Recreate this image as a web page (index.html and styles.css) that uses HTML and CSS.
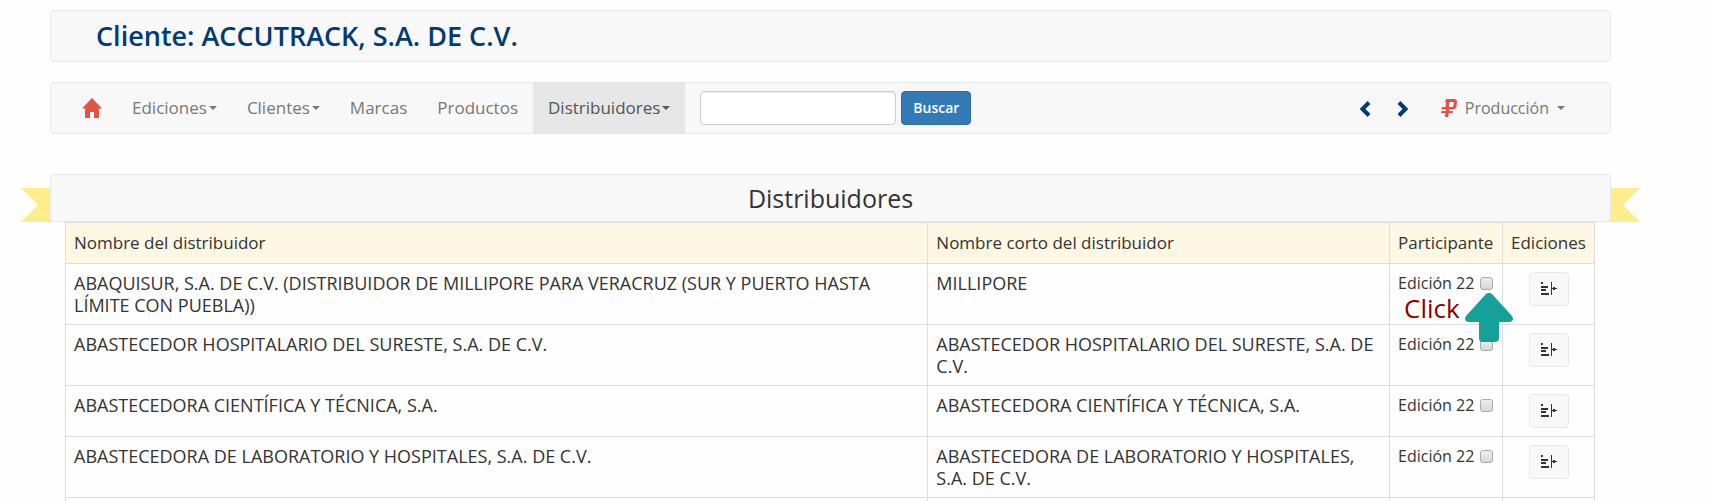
FILE: index.html
```html
<!DOCTYPE html>
<html lang="es">
<head>
<meta charset="utf-8">
<title>Distribuidores</title>
<link rel="stylesheet" href="styles.css">
</head>
<body>
<svg class="sprite" aria-hidden="true">
  <symbol id="bars" viewBox="0 0 16 14">
    <path d="M0 0h2v2H0zM0 4h7v2H0zM0 7h5v2H0zM0 11h8v2H0zM10 0h1v13h-1zM11 6h5v1h-5zM12 5h2v3h-2z" fill="currentColor"/>
  </symbol>
</svg>
<div class="page">
  <header class="bar client"><h1>Cliente: ACCUTRACK, S.A. DE C.V.</h1></header>

  <nav class="bar nav">
    <a class="item home" href="#" aria-label="Inicio"><svg width="20" height="20" viewBox="0 0 20 20"><path d="M10 0l10 10.500h-3V20h-5v-6H8v6H3v-9.500H0z" fill="#e05548"/></svg></a>
    <a class="item" href="#">Ediciones<span class="caret"></span></a>
    <a class="item" href="#">Clientes<span class="caret"></span></a>
    <a class="item" href="#">Marcas</a>
    <a class="item" href="#">Productos</a>
    <a class="item active" href="#">Distribuidores<span class="caret"></span></a>
    <form class="search">
      <input type="text" aria-label="Buscar distribuidor">
      <button type="button">Buscar</button>
    </form>
    <div class="right">
      <a class="step" href="#" aria-label="Anterior"><svg width="12" height="16" viewBox="0 0 12 16"><path d="M10 1.500L3.500 8l6.500 6.500" fill="none" stroke="#003b73" stroke-width="4"/></svg></a>
      <a class="step" href="#" aria-label="Siguiente"><svg width="12" height="16" viewBox="0 0 12 16"><path d="M2 1.500L8.500 8 2 14.500" fill="none" stroke="#003b73" stroke-width="4"/></svg></a>
      <a class="item production" href="#"><svg width="16" height="18" viewBox="0 0 16 18"><path d="M5 0h8q3 0 3 3l-.500 4q-.500 3.500-4 3.500H8.500l-.300 1.500H12l-.500 2H7.800L7 18H3.800l.700-4H0l.500-2h4.300l.300-1.500H.500L1 8h3.500L5 3H4zM8.500 3L8 8h3q1 0 1.300-1l.500-3q0-1-1-1z" fill="#e05548" fill-rule="evenodd"/></svg><span>Producción</span><span class="caret"></span></a>
    </div>
  </nav>

  <section class="ribbon">
    <svg class="tail left" viewBox="0 0 34 34" aria-hidden="true"><path d="M0 0h34v34H0l17-17z"/></svg>
    <svg class="tail end" viewBox="0 0 34 34" aria-hidden="true"><path d="M0 0h34L17 17l17 17H0z"/></svg>
    <h2 class="bar">Distribuidores</h2>
  </section>

  <div class="list">
  <table>
    <colgroup><col class="c-name"><col><col class="c-part"><col class="c-ed"></colgroup>
    <thead><tr><th>Nombre del distribuidor</th><th>Nombre corto del distribuidor</th><th>Participante</th><th>Ediciones</th></tr></thead>
    <tbody>
      <tr><td class="name">ABAQUISUR, S.A. DE C.V. (DISTRIBUIDOR DE MILLIPORE PARA VERACRUZ (SUR Y PUERTO HASTA LÍMITE CON PUEBLA))</td><td class="name">MILLIPORE</td>
        <td class="part"><label>Edición 22<input type="checkbox"></label><span class="hint">Click</span><svg class="arrow" width="48" height="50" viewBox="0 0 48 50" aria-hidden="true"><path d="M24 0q2 0 3 1l20 22q3 5-3 6H34v16q0 4-4 4H18q-4 0-4-4V29H4q-6-1-3-6L21 1q1-1 3-1z" fill="#14a19a"/></svg></td>
        <td class="ed"><button type="button" aria-label="Ediciones"><svg width="16" height="14"><use href="#bars"/></svg></button></td></tr>
      <tr><td class="name">ABASTECEDOR HOSPITALARIO DEL SURESTE, S.A. DE C.V.</td><td class="name">ABASTECEDOR HOSPITALARIO DEL SURESTE, S.A. DE C.V.</td>
        <td><label>Edición 22<input type="checkbox"></label></td>
        <td class="ed"><button type="button" aria-label="Ediciones"><svg width="16" height="14"><use href="#bars"/></svg></button></td></tr>
      <tr><td class="name">ABASTECEDORA CIENTÍFICA Y TÉCNICA, S.A.</td><td class="name">ABASTECEDORA CIENTÍFICA Y TÉCNICA, S.A.</td>
        <td><label>Edición 22<input type="checkbox"></label></td>
        <td class="ed"><button type="button" aria-label="Ediciones"><svg width="16" height="14"><use href="#bars"/></svg></button></td></tr>
      <tr><td class="name">ABASTECEDORA DE LABORATORIO Y HOSPITALES, S.A. DE C.V.</td><td class="name">ABASTECEDORA DE LABORATORIO Y HOSPITALES, S.A. DE C.V.</td>
        <td><label>Edición 22<input type="checkbox"></label></td>
        <td class="ed"><button type="button" aria-label="Ediciones"><svg width="16" height="14"><use href="#bars"/></svg></button></td></tr>
      <tr class="next"><td></td><td></td><td></td><td></td></tr>
    </tbody>
  </table>
  </div>
</div>
</body>
</html>
```
FILE: styles.css
```css
* { box-sizing: border-box; }
body {
  margin: 0;
  overflow: hidden;
  background: #fefefe;
  color: #333;
  font: 16px/22px "Comic Sans MS", "Open Sans", sans-serif;
}
.sprite { display: none; }
.page { margin: 10px 102px 0 50px; }
h1, h2 { margin: 0; }
.bar {
  background: #f8f8f8;
  border: 1px solid #e7e7e7;
  border-radius: 4px;
}
.client { padding: 9px 45px; margin-bottom: 20px; }
.client h1 { font-size: 27px; line-height: 32px; color: #003b73; font-weight: 600; }

.nav { display: flex; align-items: stretch; height: 52px; padding: 0 30px 0 16px; margin-bottom: 40px; }
.item {
  display: flex;
  align-items: center;
  padding: 0 15px;
  color: #777;
  font-size: 17px;
  text-decoration: none;
}
.item.active { background: #e7e7e7; color: #555; }
.caret {
  margin-left: 2px;
  border: 4px solid transparent;
  border-top-color: currentColor;
  border-bottom: 0;
}
.search { display: flex; align-items: center; gap: 5px; padding: 0 15px; }
.search input {
  width: 196px;
  height: 34px;
  padding: 6px 12px;
  border: 1px solid #ccc;
  border-radius: 4px;
  background: #fff;
  font: inherit;
  box-shadow: inset 0 1px 1px rgba(0, 0, 0, .075);
}
.search button {
  width: 70px;
  height: 34px;
  padding: 0;
  border: 1px solid #2e6da4;
  border-radius: 4px;
  background: #337ab7;
  color: #fff;
  font: inherit;
  font-size: 14px;
  font-weight: 600;
}
.right { display: flex; align-items: center; margin-left: auto; }
.step { display: flex; padding: 2px 13px 0; }
.production { gap: 8px; margin-left: 4px; font-size: 16px; }
.production .caret { margin-left: 0; }

.ribbon { position: relative; }
.ribbon h2 {
  position: relative;
  padding: 8px;
  font-size: 25px;
  line-height: 30px;
  font-weight: 400;
  text-align: center;
}
.tail { position: absolute; bottom: 0; width: 34px; height: 34px; fill: #ffec8b; }
.tail.left { left: -29px; }
.tail.end { right: -29px; }

.list { padding: 0 16px 0 15px; }
table { width: 100%; border-collapse: collapse; table-layout: fixed; }
.c-name { width: 56.4%; }
.c-part { width: 113px; }
.c-ed { width: 92px; }
th, td { padding: 8px; border: 1px solid #ddd; text-align: left; vertical-align: top; }
th { background: #fdf7e3; font-size: 17px; line-height: 24px; font-weight: 400; white-space: nowrap; }
.name { font-size: 18px; }
label { display: flex; align-items: center; gap: 6px; white-space: nowrap; }
label input {
  appearance: none;
  width: 13px;
  height: 13px;
  margin: 0;
  border: 1px solid #aaa;
  border-radius: 3px;
  background: linear-gradient(#eee, #d8d8d8);
}
.part { position: relative; }
.hint {
  position: absolute;
  left: 14px;
  top: 32px;
  font-size: 26px;
  line-height: 24px;
  color: #8b0000;
}
.arrow { position: absolute; left: 75px; top: 29px; z-index: 1; }
.ed { text-align: center; }
.ed button {
  display: flex;
  align-items: center;
  justify-content: center;
  width: 40px;
  height: 34px;
  margin: 0 auto;
  padding: 0;
  border: 1px solid #e7e7e7;
  border-radius: 4px;
  background: #f8f8f8;
  color: #333;
}
.next td { height: 5px; padding: 0; }
```
